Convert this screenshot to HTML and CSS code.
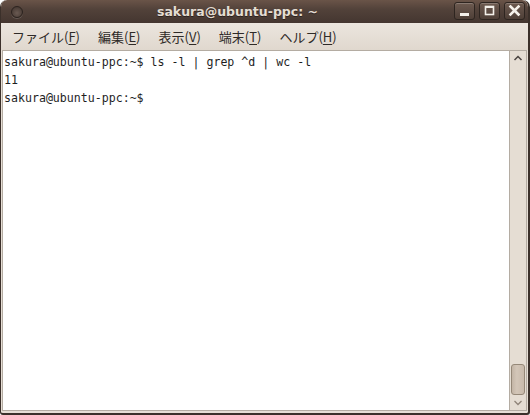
FILE: index.html
```html
<!DOCTYPE html>
<html>
<head>
<meta charset="utf-8">
<link rel="stylesheet" href="styles.css">
</head>
<body>
<div class="window">
  <div class="titlebar">
    <span class="dot"></span>
    <span class="title">sakura@ubuntu-ppc: ~</span>
    <div class="buttons">
      <span class="btn"><svg width="21" height="18" viewBox="0 0 21 18"><rect x="6" y="11" width="9" height="3" fill="#f4f0ea"/></svg></span>
      <span class="btn"><svg width="21" height="18" viewBox="0 0 21 18"><rect x="6.5" y="4.5" width="8" height="8" fill="none" stroke="#f4f0ea" stroke-width="1.6"/><rect x="6" y="4" width="9" height="2" fill="#f4f0ea"/></svg></span>
      <span class="btn"><svg width="21" height="18" viewBox="0 0 21 18"><path d="M6.5 4.5 L14.5 12.5 M14.5 4.5 L6.5 12.5" stroke="#f4f0ea" stroke-width="2.6" stroke-linecap="square"/></svg></span>
    </div>
  </div>
  <div class="menubar">
    <span class="menu">ファイル(<u>F</u>)</span>
    <span class="menu">編集(<u>E</u>)</span>
    <span class="menu">表示(<u>V</u>)</span>
    <span class="menu">端末(<u>T</u>)</span>
    <span class="menu">ヘルプ(<u>H</u>)</span>
  </div>
  <div class="body">
    <div class="terminal">
<div class="line">sakura@ubuntu-ppc:~$ ls -l | grep ^d | wc -l</div>
<div class="line">11</div>
<div class="line">sakura@ubuntu-ppc:~$</div>
    </div>
    <div class="scrollbar">
      <svg class="arrow" width="16" height="14" viewBox="0 0 16 14"><path d="M4.5 9 L8 5.5 L11.5 9" fill="none" stroke="#4a4440" stroke-width="1.5"/></svg>
      <div class="track"><div class="thumb"></div></div>
      <svg class="arrow" width="16" height="14" viewBox="0 0 16 14"><path d="M4.5 5 L8 8.5 L11.5 5" fill="none" stroke="#8f8478" stroke-width="1.3"/></svg>
    </div>
  </div>
</div>
</body>
</html>
```
FILE: styles.css
```css
html, body {
  margin: 0;
  padding: 0;
  background: #ffffff;
}
.window {
  width: 530px;
  height: 415px;
  box-sizing: border-box;
  display: flex;
  flex-direction: column;
  background: #e6ded5;
  border-radius: 7px 7px 3px 3px;
  border: 1px solid #3b302a;
  border-top: none;
  border-right-width: 2px;
  border-bottom-width: 2px;
  overflow: hidden;
}
.titlebar {
  height: 23px;
  flex: none;
  display: flex;
  align-items: center;
  position: relative;
  background: linear-gradient(#6a5448, #52423a 40%, #443630);
  border-radius: 6px 6px 0 0;
}
.dot {
  position: absolute;
  left: 10px;
  top: 6px;
  width: 10px;
  height: 10px;
  border-radius: 50%;
  background: radial-gradient(circle at 50% 60%, #6a5a52, #3e322c);
  border: 1px solid #2c231f;
  box-shadow: 0 1px 0 rgba(255,255,255,0.15);
}
.title {
  flex: 1;
  text-align: center;
  font-family: "DejaVu Sans", sans-serif;
  font-weight: bold;
  font-size: 12.5px;
  color: #e4ddd2;
  padding-right: 54px;
  text-shadow: 0 1px 0 #2b221e;
}
.buttons {
  position: absolute;
  right: 3px;
  top: 2px;
  display: flex;
  gap: 4px;
}
.btn {
  width: 21px;
  height: 18px;
  box-sizing: border-box;
  border: 1px solid #2e2520;
  border-radius: 3px;
  background: linear-gradient(#6d5a50, #4e3f37);
  box-shadow: inset 0 1px 0 rgba(255,255,255,0.2);
  display: flex;
  align-items: center;
  justify-content: center;
}
.btn svg { margin: -1px; }
.menubar {
  height: 27px;
  flex: none;
  display: flex;
  align-items: center;
  padding-left: 11px;
  gap: 18px;
  background: linear-gradient(#ebe5de, #e0d8ce);
  font-family: "Noto Sans CJK JP", "DejaVu Sans", sans-serif;
  font-size: 13px;
  color: #2e2a27;
}
.menu u { text-decoration-thickness: 1px; text-underline-offset: 2px; }
.body {
  flex: 1;
  display: flex;
  padding: 0 1px 2px 1px;
  min-height: 0;
}
.terminal {
  flex: 1;
  background: #ffffff;
  border: 1px solid #b4aca2;
  border-right: none;
  padding: 2px 1px;
  font-family: "DejaVu Sans Mono", monospace;
  font-size: 11.6px;
  line-height: 18px;
  color: #1e1e1e;
}
.scrollbar {
  width: 16px;
  flex: none;
  display: flex;
  flex-direction: column;
  background: #e5ddd3;
  border: 1px solid #b4aca2;
}
.arrow { flex: none; display: block; }
.track {
  flex: 1;
  display: flex;
  flex-direction: column;
  justify-content: flex-end;
  padding: 0 1px 1px 1px;
}
.thumb {
  height: 29px;
  border: 1px solid #958878;
  border-radius: 3px;
  background: linear-gradient(90deg, #c3b5a6, #d3c6b8 40%, #c8baab);
}
```
